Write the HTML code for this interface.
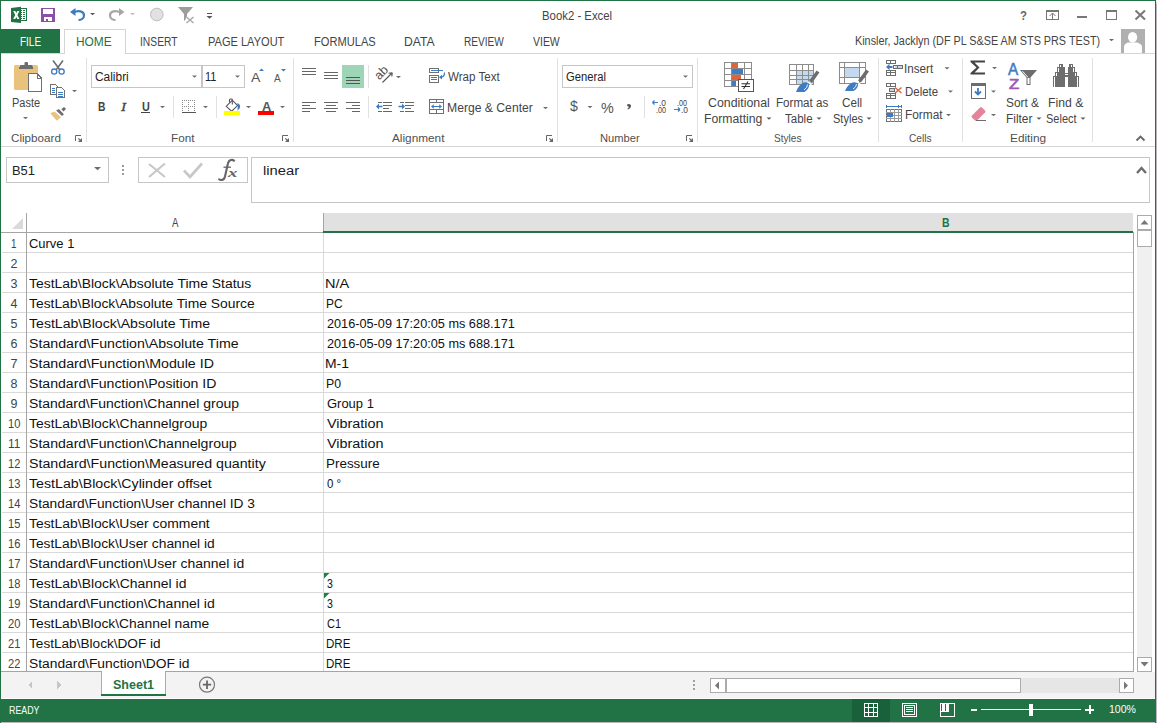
<!DOCTYPE html>
<html><head><meta charset="utf-8"><style>
html,body{margin:0;padding:0;width:1157px;height:723px;overflow:hidden;background:#fff;}
#t span{position:absolute;white-space:pre;line-height:1;transform-origin:0 0;font-family:"Liberation Sans", sans-serif;}
svg{position:absolute;left:0;top:0;}
</style></head><body>
<svg width="1157" height="723" viewBox="0 0 1157 723" shape-rendering="crispEdges">
<path d="M11 8 L21 6.8 L21 23 L11 22 Z" fill="#217346" shape-rendering="auto"/>
<rect x="21" y="8" width="6" height="13" fill="#217346"/>
<rect x="21" y="9" width="5" height="11" fill="#fff"/>
<rect x="21" y="10" width="1" height="1" fill="#217346"/>
<rect x="23" y="10" width="2" height="1" fill="#217346"/>
<rect x="21" y="12" width="1" height="1" fill="#217346"/>
<rect x="23" y="12" width="2" height="1" fill="#217346"/>
<rect x="21" y="14" width="1" height="1" fill="#217346"/>
<rect x="23" y="14" width="2" height="1" fill="#217346"/>
<rect x="21" y="16" width="1" height="1" fill="#217346"/>
<rect x="23" y="16" width="2" height="1" fill="#217346"/>
<rect x="21" y="18" width="1" height="1" fill="#217346"/>
<rect x="23" y="18" width="2" height="1" fill="#217346"/>
<path d="M13.2 11 h2.1 l1 1.9 l1 -1.9 h2.1 l-2 3.9 l2 4 h-2.1 l-1 -2 l-1 2 h-2.1 l2 -4 z" fill="#fff" shape-rendering="auto"/>
<path d="M41 8h14v14h-14z" fill="#8a4fa8"/>
<rect x="43" y="9" width="10" height="5" fill="#fff"/>
<rect x="44" y="17" width="8" height="4" fill="#fff"/>
<rect x="46" y="19" width="2" height="2" fill="#8b4ea6"/>
<path d="M73.5 12.5 C78 10 84 11 84 15.5 C84 18.5 81 20 78.5 20" fill="none" stroke="#3e7bc0" stroke-width="2.2" shape-rendering="auto"/>
<path d="M70 12 L75.5 8 L75.5 16 Z" fill="#3e7bc0" shape-rendering="auto"/>
<path d="M90 13h5l-2.5 2.25z" fill="#555" shape-rendering="auto"/>
<path d="M120.5 12.5 C116 10 110 11 110 15.5 C110 18.5 113 20 115.5 20" fill="none" stroke="#a6a6a6" stroke-width="2.2" shape-rendering="auto"/>
<path d="M124.5 12 L119 8 L119 16 Z" fill="#a6a6a6" shape-rendering="auto"/>
<path d="M130 13h5l-2.5 2.25z" fill="#bdbdbd" shape-rendering="auto"/>
<circle cx="156.8" cy="14.5" r="6.3" fill="#e3dfe3" stroke="#bdbdbd" stroke-width="1" shape-rendering="auto"/>
<path d="M178 7 H193 L187 14 V18 L184 21 V14 Z" fill="#9d9d9d" shape-rendering="auto"/>
<path d="M186.5 17 L193.5 23 M193.5 17 L186.5 23" stroke="#fff" stroke-width="3" shape-rendering="auto"/>
<path d="M186.5 17 L193.5 23 M193.5 17 L186.5 23" stroke="#a9a9a9" stroke-width="1.5" shape-rendering="auto"/>
<rect x="207" y="13" width="5" height="1" fill="#555"/>
<path d="M206.5 16h6l-3.0 2.70z" fill="#555" shape-rendering="auto"/>
<rect x="1046" y="10" width="13" height="1" fill="#777"/>
<rect x="1046" y="19" width="13" height="1" fill="#777"/>
<rect x="1046" y="10" width="1" height="10" fill="#777"/>
<rect x="1058" y="10" width="1" height="10" fill="#777"/>
<rect x="1046" y="11" width="13" height="1" fill="#777"/>
<path d="M1052.5 13 L1049.5 16 M1052.5 13 L1055.5 16 M1052.5 13.5 V19" stroke="#777" stroke-width="1" fill="none" shape-rendering="auto"/>
<rect x="1077" y="16" width="10" height="2" fill="#777"/>
<rect x="1106" y="10" width="11" height="1" fill="#777"/>
<rect x="1106" y="19" width="11" height="1" fill="#777"/>
<rect x="1106" y="10" width="1" height="10" fill="#777"/>
<rect x="1116" y="10" width="1" height="10" fill="#777"/>
<rect x="1106" y="11" width="11" height="1" fill="#777"/>
<path d="M1135.5 10.5 L1145 19.5 M1145 10.5 L1135.5 19.5" stroke="#777" stroke-width="2" shape-rendering="auto"/>
<rect x="0" y="29" width="60" height="25" fill="#217346"/>
<rect x="0" y="53" width="1155" height="1" fill="#d5d5d5"/>
<rect x="65" y="30" width="60" height="24" fill="#fff"/>
<rect x="64" y="29" width="1" height="25" fill="#d5d5d5"/>
<rect x="125" y="29" width="1" height="25" fill="#d5d5d5"/>
<rect x="64" y="29" width="62" height="1" fill="#d5d5d5"/>
<path d="M1109 39h5l-2.5 2.25z" fill="#666" shape-rendering="auto"/>
<rect x="1121" y="29" width="24" height="24" fill="#b0b0b0"/>
<ellipse cx="1132.6" cy="37.3" rx="4.6" ry="5.4" fill="#fff" shape-rendering="auto"/>
<path d="M1124 53 V47 C1124 44 1127 42.5 1129 42.5 H1136 C1138 42.5 1142 44 1142 47 V53 Z" fill="#fff" shape-rendering="auto"/>
<rect x="0" y="146" width="1155" height="1" fill="#d4d4d4"/>
<rect x="86" y="58" width="1" height="84" fill="#e1e1e1"/>
<rect x="293" y="58" width="1" height="84" fill="#e1e1e1"/>
<rect x="557" y="58" width="1" height="84" fill="#e1e1e1"/>
<rect x="697" y="58" width="1" height="84" fill="#e1e1e1"/>
<rect x="878" y="58" width="1" height="84" fill="#e1e1e1"/>
<rect x="962" y="58" width="1" height="84" fill="#e1e1e1"/>
<rect x="1092" y="58" width="1" height="84" fill="#e1e1e1"/>
<path d="M75.5 141 V135.5 H81" fill="none" stroke="#666" stroke-width="1" shape-rendering="auto"/>
<path d="M82 138 V142 H78 Z" fill="#666" shape-rendering="auto"/>
<path d="M78.3 138.3 L81 141" stroke="#666" stroke-width="1.2" shape-rendering="auto"/>
<path d="M282.5 141 V135.5 H288" fill="none" stroke="#666" stroke-width="1" shape-rendering="auto"/>
<path d="M289 138 V142 H285 Z" fill="#666" shape-rendering="auto"/>
<path d="M285.3 138.3 L288 141" stroke="#666" stroke-width="1.2" shape-rendering="auto"/>
<path d="M546.5 141 V135.5 H552" fill="none" stroke="#666" stroke-width="1" shape-rendering="auto"/>
<path d="M553 138 V142 H549 Z" fill="#666" shape-rendering="auto"/>
<path d="M549.3 138.3 L552 141" stroke="#666" stroke-width="1.2" shape-rendering="auto"/>
<path d="M686.5 141 V135.5 H692" fill="none" stroke="#666" stroke-width="1" shape-rendering="auto"/>
<path d="M693 138 V142 H689 Z" fill="#666" shape-rendering="auto"/>
<path d="M689.3 138.3 L692 141" stroke="#666" stroke-width="1.2" shape-rendering="auto"/>
<path d="M1136.5 140.5 L1140.5 136.5 L1144.5 140.5" fill="none" stroke="#666" stroke-width="1.8" shape-rendering="auto"/>
<rect x="14" y="65" width="24" height="25" rx="1.5" fill="#e9c27c" shape-rendering="auto"/>
<path d="M19 66.5 H33 V68.8 H19 Z" fill="#6d6d6d"/>
<path d="M20 68.5 V66 Q20 65 21 65 H24.5 V63 Q24.5 62 25.5 62 H27 Q28 62 28 63 V65 H31.5 Q32.5 65 32.5 66 V68.5 Z" fill="#6d6d6d" shape-rendering="auto"/>
<path d="M28.5 73.5 H37 L41.5 78 V91.5 H28.5 Z" fill="#fff" stroke="#707070" stroke-width="1"/>
<path d="M37 73.5 V78 H41.5" fill="none" stroke="#707070" stroke-width="1"/>
<path d="M23 117h5l-2.5 2.25z" fill="#6d6d6d" shape-rendering="auto"/>
<path d="M53 60.5 L60 70 M63 60.5 L56 70" stroke="#6d6d6d" stroke-width="1.6" fill="none" shape-rendering="auto"/>
<circle cx="54.2" cy="71.6" r="2.6" fill="none" stroke="#3e7bc0" stroke-width="1.3" shape-rendering="auto"/>
<circle cx="61.6" cy="71.6" r="2.6" fill="none" stroke="#3e7bc0" stroke-width="1.3" shape-rendering="auto"/>
<path d="M50.5 84.5 H55.5 L57.5 86.5 V94.5 H50.5 Z" fill="#fff" stroke="#707070" stroke-width="1"/>
<path d="M56.5 87.5 H61.5 L64.5 90.5 V97.5 H56.5 Z" fill="#fff" stroke="#707070" stroke-width="1"/>
<rect x="52" y="88" width="3" height="1" fill="#3e7bc0"/>
<rect x="52" y="90" width="3" height="1" fill="#3e7bc0"/>
<rect x="52" y="92" width="3" height="1" fill="#3e7bc0"/>
<rect x="58" y="92" width="5" height="1" fill="#3e7bc0"/>
<rect x="58" y="94" width="5" height="1" fill="#3e7bc0"/>
<rect x="58" y="96" width="5" height="1" fill="#3e7bc0"/>
<path d="M72 90h5l-2.5 2.25z" fill="#6d6d6d" shape-rendering="auto"/>
<path d="M50.2 113.3 L54.5 111.4 L61 117.2 L56.8 120.8 Z" fill="#e9c27c" shape-rendering="auto"/>
<path d="M56.1 110.4 L58.8 109.0 L63.9 114.2 L62.0 115.9 Z" fill="#6d6d6d" shape-rendering="auto"/>
<path d="M61.3 109.3 L64 107.0 L66 108.8 L63.7 111.4 Z" fill="#6d6d6d" shape-rendering="auto"/>
<rect x="91" y="65" width="112" height="23" fill="#fff"/>
<rect x="91" y="65" width="112" height="1" fill="#c6c6c6"/>
<rect x="91" y="87" width="112" height="1" fill="#c6c6c6"/>
<rect x="91" y="65" width="1" height="23" fill="#c6c6c6"/>
<rect x="202" y="65" width="1" height="23" fill="#c6c6c6"/>
<rect x="202" y="65" width="43" height="1" fill="#c6c6c6"/>
<rect x="202" y="87" width="43" height="1" fill="#c6c6c6"/>
<rect x="202" y="65" width="1" height="23" fill="#c6c6c6"/>
<rect x="244" y="65" width="1" height="23" fill="#c6c6c6"/>
<rect x="201" y="65" width="1" height="23" fill="#c6c6c6"/>
<path d="M192 75.5h5l-2.5 2.25z" fill="#6d6d6d" shape-rendering="auto"/>
<path d="M235 75.5h5l-2.5 2.25z" fill="#6d6d6d" shape-rendering="auto"/>
<path d="M259 71 L261.5 68.5 L264 71 Z" fill="#3e7bc0" shape-rendering="auto"/>
<path d="M281 69 L286 69 L283.5 71.5 Z" fill="#3e7bc0" shape-rendering="auto"/>
<rect x="141" y="112" width="9" height="1" fill="#444"/>
<path d="M160 106h5l-2.5 2.25z" fill="#6d6d6d" shape-rendering="auto"/>
<rect x="173" y="96" width="1" height="22" fill="#e1e1e1"/>
<rect x="182" y="100" width="1" height="1" fill="#8a8a8a"/>
<rect x="184" y="100" width="1" height="1" fill="#8a8a8a"/>
<rect x="186" y="100" width="1" height="1" fill="#8a8a8a"/>
<rect x="188" y="100" width="1" height="1" fill="#8a8a8a"/>
<rect x="190" y="100" width="1" height="1" fill="#8a8a8a"/>
<rect x="192" y="100" width="1" height="1" fill="#8a8a8a"/>
<rect x="194" y="100" width="1" height="1" fill="#8a8a8a"/>
<rect x="182" y="102" width="1" height="1" fill="#8a8a8a"/>
<rect x="188" y="102" width="1" height="1" fill="#8a8a8a"/>
<rect x="194" y="102" width="1" height="1" fill="#8a8a8a"/>
<rect x="182" y="104" width="1" height="1" fill="#8a8a8a"/>
<rect x="188" y="104" width="1" height="1" fill="#8a8a8a"/>
<rect x="194" y="104" width="1" height="1" fill="#8a8a8a"/>
<rect x="182" y="106" width="1" height="1" fill="#8a8a8a"/>
<rect x="184" y="106" width="1" height="1" fill="#8a8a8a"/>
<rect x="186" y="106" width="1" height="1" fill="#8a8a8a"/>
<rect x="188" y="106" width="1" height="1" fill="#8a8a8a"/>
<rect x="190" y="106" width="1" height="1" fill="#8a8a8a"/>
<rect x="192" y="106" width="1" height="1" fill="#8a8a8a"/>
<rect x="194" y="106" width="1" height="1" fill="#8a8a8a"/>
<rect x="182" y="108" width="1" height="1" fill="#8a8a8a"/>
<rect x="188" y="108" width="1" height="1" fill="#8a8a8a"/>
<rect x="194" y="108" width="1" height="1" fill="#8a8a8a"/>
<rect x="182" y="110" width="1" height="1" fill="#8a8a8a"/>
<rect x="188" y="110" width="1" height="1" fill="#8a8a8a"/>
<rect x="194" y="110" width="1" height="1" fill="#8a8a8a"/>
<rect x="182" y="112" width="1" height="1" fill="#8a8a8a"/>
<rect x="188" y="112" width="1" height="1" fill="#8a8a8a"/>
<rect x="194" y="112" width="1" height="1" fill="#8a8a8a"/>
<rect x="182" y="112" width="14" height="1" fill="#555"/>
<path d="M203 106h5l-2.5 2.25z" fill="#6d6d6d" shape-rendering="auto"/>
<rect x="216" y="96" width="1" height="22" fill="#e1e1e1"/>
<path d="M226.2 106.3 L232.3 100.2 L237.6 105.6 L231.6 111.2 Z" fill="#fff" stroke="#555" stroke-width="1.1" shape-rendering="auto"/>
<path d="M232.3 104.5 V99.8 Q232.3 99 231.3 99 H230.3 Q229.5 99 229.5 100 V102.5" fill="none" stroke="#555" stroke-width="1.1" shape-rendering="auto"/>
<path d="M237.2 103 Q240.8 104 240 107.5 Q239.3 109.5 237.5 110.6 L237.8 105.6 Z" fill="#3e7bc0" shape-rendering="auto"/>
<rect x="224" y="111" width="16" height="4" fill="#ffff00"/>
<path d="M246 106h5l-2.5 2.25z" fill="#6d6d6d" shape-rendering="auto"/>
<rect x="258" y="111" width="16" height="4" fill="#ff0000"/>
<path d="M280 106h5l-2.5 2.25z" fill="#6d6d6d" shape-rendering="auto"/>
<rect x="302" y="68" width="14" height="1" fill="#666"/>
<rect x="302" y="71" width="14" height="1" fill="#666"/>
<rect x="302" y="74" width="14" height="1" fill="#666"/>
<rect x="324" y="72" width="14" height="1" fill="#666"/>
<rect x="324" y="75" width="14" height="1" fill="#666"/>
<rect x="324" y="78" width="14" height="1" fill="#666"/>
<rect x="346" y="77" width="14" height="1" fill="#666"/>
<rect x="346" y="80" width="14" height="1" fill="#666"/>
<rect x="346" y="83" width="14" height="1" fill="#666"/>
<rect x="342" y="65" width="22" height="23" fill="#9fd5b7"/>
<rect x="346" y="77" width="14" height="1" fill="#555"/>
<rect x="346" y="80" width="14" height="1" fill="#555"/>
<rect x="346" y="83" width="14" height="1" fill="#555"/>
<rect x="368" y="65" width="1" height="23" fill="#e1e1e1"/>
<text x="0" y="0" font-family="Liberation Sans" font-size="12.5" fill="#555" transform="translate(379.2 80.5) rotate(-45)">ab</text>
<path d="M382.5 82.5 L392 73 M392.3 72.7 L388.5 73.2 M392.3 72.7 L391.8 76.5" stroke="#555" stroke-width="1.1" fill="none" shape-rendering="auto"/>
<path d="M396 76h5l-2.5 2.25z" fill="#6d6d6d" shape-rendering="auto"/>
<rect x="302" y="102" width="14" height="1" fill="#666"/>
<rect x="302" y="105" width="8" height="1" fill="#666"/>
<rect x="302" y="108" width="14" height="1" fill="#666"/>
<rect x="302" y="111" width="8" height="1" fill="#666"/>
<rect x="324" y="102" width="14" height="1" fill="#666"/>
<rect x="326" y="105" width="10" height="1" fill="#666"/>
<rect x="324" y="108" width="14" height="1" fill="#666"/>
<rect x="326" y="111" width="10" height="1" fill="#666"/>
<rect x="346" y="102" width="14" height="1" fill="#666"/>
<rect x="352" y="105" width="8" height="1" fill="#666"/>
<rect x="346" y="108" width="14" height="1" fill="#666"/>
<rect x="352" y="111" width="8" height="1" fill="#666"/>
<rect x="368" y="96" width="1" height="22" fill="#e1e1e1"/>
<rect x="378" y="102" width="4" height="1" fill="#666"/>
<rect x="383" y="102" width="9" height="1" fill="#666"/>
<rect x="383" y="105" width="9" height="1" fill="#666"/>
<rect x="383" y="108" width="6" height="1" fill="#666"/>
<rect x="378" y="111" width="4" height="1" fill="#666"/>
<rect x="383" y="111" width="9" height="1" fill="#666"/>
<path d="M376 106.5 L379 103.5 V105.7 H382.5 V107.3 H379 V109.5 Z" fill="#3e7bc0" shape-rendering="auto"/>
<rect x="400" y="102" width="4" height="1" fill="#666"/>
<rect x="405" y="102" width="9" height="1" fill="#666"/>
<rect x="405" y="105" width="9" height="1" fill="#666"/>
<rect x="405" y="108" width="6" height="1" fill="#666"/>
<rect x="400" y="111" width="4" height="1" fill="#666"/>
<rect x="405" y="111" width="9" height="1" fill="#666"/>
<path d="M405 106.5 L402 103.5 V105.7 H398.5 V107.3 H402 V109.5 Z" fill="#3e7bc0" shape-rendering="auto"/>
<rect x="429" y="68" width="10" height="5" fill="#fff"/>
<rect x="429" y="68" width="10" height="1" fill="#707070"/>
<rect x="429" y="72" width="10" height="1" fill="#707070"/>
<rect x="429" y="68" width="1" height="5" fill="#707070"/>
<rect x="438" y="68" width="1" height="5" fill="#707070"/>
<rect x="431" y="70" width="12" height="1" fill="#3e7bc0"/>
<rect x="429" y="75" width="10" height="8" fill="#fff"/>
<rect x="429" y="75" width="10" height="1" fill="#707070"/>
<rect x="429" y="82" width="10" height="1" fill="#707070"/>
<rect x="429" y="75" width="1" height="8" fill="#707070"/>
<rect x="438" y="75" width="1" height="8" fill="#707070"/>
<rect x="431" y="77" width="6" height="1" fill="#3e7bc0"/>
<rect x="431" y="79" width="6" height="1" fill="#3e7bc0"/>
<path d="M444.5 72.5 Q444.8 77.2 440.2 77.2" fill="none" stroke="#3e7bc0" stroke-width="1.2" shape-rendering="auto"/>
<path d="M439 77.2 L442 74.8 L442 79.6 Z" fill="#3e7bc0" shape-rendering="auto"/>
<rect x="429" y="99" width="15" height="15" fill="#fff"/>
<rect x="429" y="99" width="15" height="1" fill="#707070"/>
<rect x="429" y="113" width="15" height="1" fill="#707070"/>
<rect x="429" y="99" width="1" height="15" fill="#707070"/>
<rect x="443" y="99" width="1" height="15" fill="#707070"/>
<rect x="429" y="102" width="15" height="1" fill="#707070"/>
<rect x="429" y="109" width="15" height="1" fill="#707070"/>
<rect x="436" y="99" width="1" height="4" fill="#707070"/>
<rect x="436" y="109" width="1" height="5" fill="#707070"/>
<rect x="432" y="106" width="9" height="1" fill="#3e7bc0"/>
<path d="M431 106.5 L433.8 104.3 V108.7 Z M442 106.5 L439.2 104.3 V108.7 Z" fill="#3e7bc0" shape-rendering="auto"/>
<path d="M543 107h5l-2.5 2.25z" fill="#6d6d6d" shape-rendering="auto"/>
<rect x="562" y="65" width="131" height="23" fill="#fff"/>
<rect x="562" y="65" width="131" height="1" fill="#c6c6c6"/>
<rect x="562" y="87" width="131" height="1" fill="#c6c6c6"/>
<rect x="562" y="65" width="1" height="23" fill="#c6c6c6"/>
<rect x="692" y="65" width="1" height="23" fill="#c6c6c6"/>
<path d="M683 75.5h5l-2.5 2.25z" fill="#6d6d6d" shape-rendering="auto"/>
<path d="M587.5 106h5l-2.5 2.25z" fill="#6d6d6d" shape-rendering="auto"/>
<path d="M628.5 104 Q631.5 104 631 106.5 Q630.5 108.5 628 109.5 L627.5 108.5 Q629 107.5 629 106.8 Q627 106.5 627 105.3 Q627.2 104 628.5 104 Z" fill="#555" shape-rendering="auto"/>
<rect x="644" y="96" width="1" height="22" fill="#e1e1e1"/>
<path d="M652.5 102.5 H658 M652.5 102.5 L654.5 100.5 M652.5 102.5 L654.5 104.5" stroke="#3e7bc0" stroke-width="1.2" fill="none" shape-rendering="auto"/>
<path d="M674 109.5 H680 M680 109.5 L678 107.5 M680 109.5 L678 111.5" stroke="#3e7bc0" stroke-width="1.2" fill="none" shape-rendering="auto"/>
<rect x="724" y="62" width="28" height="1" fill="#8c8c8c"/>
<rect x="724" y="68" width="28" height="1" fill="#8c8c8c"/>
<rect x="724" y="74" width="28" height="1" fill="#8c8c8c"/>
<rect x="724" y="80" width="28" height="1" fill="#8c8c8c"/>
<rect x="724" y="86" width="28" height="1" fill="#8c8c8c"/>
<rect x="724" y="62" width="1" height="25" fill="#8c8c8c"/>
<rect x="731" y="62" width="1" height="25" fill="#8c8c8c"/>
<rect x="744" y="62" width="1" height="25" fill="#8c8c8c"/>
<rect x="751" y="62" width="1" height="25" fill="#8c8c8c"/>
<rect x="732" y="63" width="6" height="5" fill="#e0643a"/>
<rect x="732" y="69" width="11" height="5" fill="#3f7cc4"/>
<rect x="732" y="75" width="9" height="5" fill="#e0643a"/>
<rect x="732" y="81" width="4" height="5" fill="#3f7cc4"/>
<rect x="738" y="79" width="16" height="13" fill="#fff"/>
<rect x="738" y="79" width="16" height="1" fill="#555"/>
<rect x="738" y="91" width="16" height="1" fill="#555"/>
<rect x="738" y="79" width="1" height="13" fill="#555"/>
<rect x="753" y="79" width="1" height="13" fill="#555"/>
<path d="M741.5 83.8 H750 M741.5 86.5 H750 M748 81.5 L743.5 89" stroke="#333" stroke-width="1.1" fill="none" shape-rendering="auto"/>
<path d="M766.5 117.5h5l-2.5 2.25z" fill="#5a5a5a" shape-rendering="auto"/>
<rect x="796" y="70" width="18" height="15" fill="#c5d9ee"/>
<rect x="789" y="64" width="25" height="1" fill="#8c8c8c"/>
<rect x="789" y="70" width="25" height="1" fill="#8c8c8c"/>
<rect x="789" y="75" width="25" height="1" fill="#8c8c8c"/>
<rect x="789" y="79" width="25" height="1" fill="#8c8c8c"/>
<rect x="789" y="84" width="25" height="1" fill="#8c8c8c"/>
<rect x="789" y="64" width="1" height="21" fill="#8c8c8c"/>
<rect x="796" y="64" width="1" height="21" fill="#8c8c8c"/>
<rect x="802" y="64" width="1" height="21" fill="#8c8c8c"/>
<rect x="808" y="64" width="1" height="21" fill="#8c8c8c"/>
<rect x="813" y="64" width="1" height="21" fill="#8c8c8c"/>
<path d="M810.5 82 L818 71.5" stroke="#6d6d6d" stroke-width="3.6" shape-rendering="auto"/>
<path d="M807.5 81.5 L811.5 85" stroke="#fff" stroke-width="1.2" shape-rendering="auto"/>
<path d="M796 92 Q798.5 85 803.5 82.5 Q807.5 81.5 809 84.5 Q809.5 88.5 804.5 92 Z" fill="#3f7cc4" shape-rendering="auto"/>
<path d="M804 90 Q807.5 87.5 807.5 84.5" stroke="#fff" stroke-width="0.9" fill="none" shape-rendering="auto"/>
<path d="M816.5 117.5h5l-2.5 2.25z" fill="#5a5a5a" shape-rendering="auto"/>
<rect x="844" y="67" width="15" height="10" fill="#c5d9ee"/>
<rect x="839" y="62" width="27" height="1" fill="#8c8c8c"/>
<rect x="839" y="67" width="27" height="1" fill="#8c8c8c"/>
<rect x="839" y="77" width="27" height="1" fill="#8c8c8c"/>
<rect x="839" y="83" width="27" height="1" fill="#8c8c8c"/>
<rect x="839" y="62" width="1" height="22" fill="#8c8c8c"/>
<rect x="844" y="62" width="1" height="22" fill="#8c8c8c"/>
<rect x="859" y="62" width="1" height="22" fill="#8c8c8c"/>
<rect x="865" y="62" width="1" height="22" fill="#8c8c8c"/>
<path d="M859.5 81.5 L867.5 70.5" stroke="#6d6d6d" stroke-width="3.6" shape-rendering="auto"/>
<path d="M856.5 81 L860.5 84.5" stroke="#fff" stroke-width="1.2" shape-rendering="auto"/>
<path d="M845 91 Q847.5 84.5 852.5 82.5 Q856.5 81.5 858 84 Q858.5 88 853.5 91 Z" fill="#3f7cc4" shape-rendering="auto"/>
<path d="M853 89 Q856.5 87 856.5 84" stroke="#fff" stroke-width="0.9" fill="none" shape-rendering="auto"/>
<path d="M866.5 117.5h5l-2.5 2.25z" fill="#5a5a5a" shape-rendering="auto"/>
<rect x="886" y="60" width="10" height="1" fill="#6d6d6d"/>
<rect x="886" y="63" width="10" height="1" fill="#6d6d6d"/>
<rect x="886" y="60" width="1" height="4" fill="#6d6d6d"/>
<rect x="895" y="60" width="1" height="4" fill="#6d6d6d"/>
<rect x="890" y="60" width="1" height="4" fill="#6d6d6d"/>
<rect x="886" y="70" width="10" height="1" fill="#6d6d6d"/>
<rect x="886" y="75" width="10" height="1" fill="#6d6d6d"/>
<rect x="886" y="70" width="1" height="6" fill="#6d6d6d"/>
<rect x="895" y="70" width="1" height="6" fill="#6d6d6d"/>
<rect x="890" y="70" width="1" height="6" fill="#6d6d6d"/>
<rect x="886" y="72" width="10" height="1" fill="#6d6d6d"/>
<rect x="893" y="65" width="10" height="1" fill="#6d6d6d"/>
<rect x="893" y="68" width="10" height="1" fill="#6d6d6d"/>
<rect x="893" y="65" width="1" height="4" fill="#6d6d6d"/>
<rect x="902" y="65" width="1" height="4" fill="#6d6d6d"/>
<rect x="897" y="65" width="1" height="4" fill="#6d6d6d"/>
<rect x="894" y="66" width="3" height="2" fill="#c5d9ee"/>
<rect x="898" y="66" width="4" height="2" fill="#c5d9ee"/>
<rect x="886" y="64" width="9" height="6" fill="#fff"/>
<rect x="893" y="65" width="10" height="1" fill="#6d6d6d"/>
<rect x="893" y="68" width="10" height="1" fill="#6d6d6d"/>
<rect x="893" y="65" width="1" height="4" fill="#6d6d6d"/>
<rect x="902" y="65" width="1" height="4" fill="#6d6d6d"/>
<rect x="897" y="65" width="1" height="4" fill="#6d6d6d"/>
<path d="M886 67 L889.5 63.8 V66 H892.5 V68 H889.5 V70.2 Z" fill="#3e7bc0" shape-rendering="auto"/>
<path d="M944.5 67.2h5l-2.5 2.25z" fill="#6d6d6d" shape-rendering="auto"/>
<rect x="886" y="83" width="10" height="1" fill="#6d6d6d"/>
<rect x="886" y="86" width="10" height="1" fill="#6d6d6d"/>
<rect x="886" y="83" width="1" height="4" fill="#6d6d6d"/>
<rect x="895" y="83" width="1" height="4" fill="#6d6d6d"/>
<rect x="890" y="83" width="1" height="4" fill="#6d6d6d"/>
<rect x="886" y="93" width="10" height="1" fill="#6d6d6d"/>
<rect x="886" y="98" width="10" height="1" fill="#6d6d6d"/>
<rect x="886" y="93" width="1" height="6" fill="#6d6d6d"/>
<rect x="895" y="93" width="1" height="6" fill="#6d6d6d"/>
<rect x="890" y="93" width="1" height="6" fill="#6d6d6d"/>
<rect x="886" y="95" width="10" height="1" fill="#6d6d6d"/>
<rect x="889" y="88" width="6" height="4" fill="#c5d9ee"/>
<rect x="889" y="88" width="6" height="1" fill="#6d6d6d"/>
<rect x="889" y="91" width="6" height="1" fill="#6d6d6d"/>
<rect x="889" y="88" width="1" height="4" fill="#6d6d6d"/>
<rect x="894" y="88" width="1" height="4" fill="#6d6d6d"/>
<path d="M895 87.5 L901.5 93 M901.5 87.5 L895 93" stroke="#e0643a" stroke-width="1.5" shape-rendering="auto"/>
<path d="M948 90.5h5l-2.5 2.25z" fill="#6d6d6d" shape-rendering="auto"/>
<path d="M886.5 106.5 H901.5 M886.5 105 V108 M901.5 105 V108 M888 106.5 L889.5 105.5 M888 106.5 L889.5 107.5 M900 106.5 L898.5 105.5 M900 106.5 L898.5 107.5" stroke="#3e7bc0" stroke-width="1" fill="none"/>
<rect x="886" y="109" width="16" height="1" fill="#707070"/>
<rect x="886" y="121" width="16" height="1" fill="#707070"/>
<rect x="886" y="109" width="1" height="13" fill="#707070"/>
<rect x="901" y="109" width="1" height="13" fill="#707070"/>
<rect x="886" y="112" width="16" height="1" fill="#9a9a9a"/>
<rect x="886" y="115" width="16" height="1" fill="#9a9a9a"/>
<rect x="886" y="118" width="16" height="1" fill="#9a9a9a"/>
<rect x="890" y="109" width="1" height="13" fill="#9a9a9a"/>
<rect x="894" y="109" width="1" height="13" fill="#9a9a9a"/>
<rect x="898" y="109" width="1" height="13" fill="#9a9a9a"/>
<rect x="887" y="113" width="6" height="4" fill="#3e7bc0"/>
<path d="M946 114h5l-2.5 2.25z" fill="#6d6d6d" shape-rendering="auto"/>
<path d="M970.5 60.5 H985 V62.5 H974.5 L979.5 67.5 L974.5 72.5 H985 V74.5 H970.5 V73 L976.5 67.5 L970.5 62 Z" fill="#444" shape-rendering="auto"/>
<path d="M992 67h5l-2.5 2.25z" fill="#6d6d6d" shape-rendering="auto"/>
<rect x="971" y="83" width="15" height="16" fill="#fff"/>
<rect x="971" y="83" width="15" height="1" fill="#6d6d6d"/>
<rect x="971" y="98" width="15" height="1" fill="#6d6d6d"/>
<rect x="971" y="83" width="1" height="16" fill="#6d6d6d"/>
<rect x="985" y="83" width="1" height="16" fill="#6d6d6d"/>
<rect x="971" y="83" width="15" height="3" fill="#6d6d6d"/>
<path d="M978 88 V94 M975 91.5 L978 94.5 L981 91.5" stroke="#3e7bc0" stroke-width="1.8" fill="none" shape-rendering="auto"/>
<path d="M991 90.5h5l-2.5 2.25z" fill="#6d6d6d" shape-rendering="auto"/>
<path d="M972 115.5 L980 107.5 Q981 106.5 982 107.5 L985 110.5 Q986 111.5 985 112.5 L977 120.5 Q976 121 975 120.5 L972 117.5 Q971 116.5 972 115.5 Z" fill="#e8829a" shape-rendering="auto"/>
<rect x="976" y="120" width="10" height="1" fill="#6d6d6d"/>
<path d="M991 114h5l-2.5 2.25z" fill="#6d6d6d" shape-rendering="auto"/>
<path d="M1020 70 H1037 L1030.5 77.5 V85 H1026.5 V77.5 Z" fill="#6d6d6d" shape-rendering="auto"/>
<path d="M1027.5 78 V84 H1029.5 V78 Z" fill="#fff" shape-rendering="auto"/>
<path d="M1022.5 71.2 L1027.8 77.2" stroke="#fff" stroke-width="0.9" shape-rendering="auto"/>
<path d="M1036.5 117.5h5l-2.5 2.25z" fill="#5a5a5a" shape-rendering="auto"/>
<path d="M1053 87 V76 H1055 V72 H1057 V67 H1059 V64 H1063 V67 H1065 V72.5 H1068 V67 H1069 V64 H1073 V67 H1075 V72 H1077 V76 H1079 V87 H1068 V77 H1065 V87 Z" fill="#6d6d6d"/>
<rect x="1054" y="77" width="1" height="10" fill="#fff"/>
<rect x="1056" y="73" width="1" height="3" fill="#fff"/>
<rect x="1058" y="68" width="1" height="4" fill="#fff"/>
<rect x="1060" y="65" width="1" height="2" fill="#fff"/>
<rect x="1077" y="77" width="1" height="10" fill="#fff"/>
<rect x="1075" y="73" width="1" height="3" fill="#fff"/>
<rect x="1073" y="68" width="1" height="4" fill="#fff"/>
<rect x="1071" y="65" width="1" height="2" fill="#fff"/>
<rect x="1065" y="74" width="3" height="1" fill="#fff"/>
<path d="M1080.5 117.5h5l-2.5 2.25z" fill="#5a5a5a" shape-rendering="auto"/>
<rect x="6" y="157" width="103" height="26" fill="#fff"/>
<rect x="6" y="157" width="103" height="1" fill="#c6c6c6"/>
<rect x="6" y="182" width="103" height="1" fill="#c6c6c6"/>
<rect x="6" y="157" width="1" height="26" fill="#c6c6c6"/>
<rect x="108" y="157" width="1" height="26" fill="#c6c6c6"/>
<path d="M94 167h7l-3.5 3.15z" fill="#6d6d6d" shape-rendering="auto"/>
<rect x="122" y="165" width="2" height="2" fill="#9a9a9a"/>
<rect x="122" y="169" width="2" height="2" fill="#9a9a9a"/>
<rect x="122" y="173" width="2" height="2" fill="#9a9a9a"/>
<rect x="138" y="157" width="110" height="26" fill="#fff"/>
<rect x="138" y="157" width="110" height="1" fill="#c6c6c6"/>
<rect x="138" y="182" width="110" height="1" fill="#c6c6c6"/>
<rect x="138" y="157" width="1" height="26" fill="#c6c6c6"/>
<rect x="247" y="157" width="1" height="26" fill="#c6c6c6"/>
<path d="M149 164 L165 177 M165 163.5 L149 177" stroke="#c8c8c8" stroke-width="2.2" shape-rendering="auto"/>
<path d="M184 170.5 L190 177 L202 163.5" stroke="#c8c8c8" stroke-width="2.8" fill="none" shape-rendering="auto"/>
<path d="M234.5 161.5 Q233.5 159.5 231 160 Q228.5 160.5 227.8 164 L225 176.5 Q224 180.5 221 180 Q219 179.8 219 178.5" fill="none" stroke="#666" stroke-width="2.1" shape-rendering="auto"/>
<path d="M223.5 167.2 H231" stroke="#666" stroke-width="1.3" shape-rendering="auto"/>
<rect x="251" y="157" width="899" height="46" fill="#fff"/>
<rect x="251" y="157" width="899" height="1" fill="#c6c6c6"/>
<rect x="251" y="202" width="899" height="1" fill="#c6c6c6"/>
<rect x="251" y="157" width="1" height="46" fill="#c6c6c6"/>
<rect x="1149" y="157" width="1" height="46" fill="#c6c6c6"/>
<path d="M1137 173 L1141.5 168 L1146 173" fill="none" stroke="#6d6d6d" stroke-width="2.4" shape-rendering="auto"/>
<rect x="324" y="213" width="809" height="18" fill="#e1e1e1"/>
<rect x="26" y="213" width="1" height="459" fill="#a5a5a5"/>
<rect x="1" y="232" width="322" height="1" fill="#a5a5a5"/>
<rect x="323" y="231" width="810" height="2" fill="#217346"/>
<rect x="323" y="213" width="1" height="18" fill="#a5a5a5"/>
<path d="M23 218 V229 H12 Z" fill="#dadada" shape-rendering="auto"/>
<rect x="2" y="252" width="24" height="1" fill="#d9d9d9"/>
<rect x="27" y="252" width="1106" height="1" fill="#d9d9d9"/>
<rect x="2" y="272" width="24" height="1" fill="#d9d9d9"/>
<rect x="27" y="272" width="1106" height="1" fill="#d9d9d9"/>
<rect x="2" y="292" width="24" height="1" fill="#d9d9d9"/>
<rect x="27" y="292" width="1106" height="1" fill="#d9d9d9"/>
<rect x="2" y="312" width="24" height="1" fill="#d9d9d9"/>
<rect x="27" y="312" width="1106" height="1" fill="#d9d9d9"/>
<rect x="2" y="332" width="24" height="1" fill="#d9d9d9"/>
<rect x="27" y="332" width="1106" height="1" fill="#d9d9d9"/>
<rect x="2" y="352" width="24" height="1" fill="#d9d9d9"/>
<rect x="27" y="352" width="1106" height="1" fill="#d9d9d9"/>
<rect x="2" y="372" width="24" height="1" fill="#d9d9d9"/>
<rect x="27" y="372" width="1106" height="1" fill="#d9d9d9"/>
<rect x="2" y="392" width="24" height="1" fill="#d9d9d9"/>
<rect x="27" y="392" width="1106" height="1" fill="#d9d9d9"/>
<rect x="2" y="412" width="24" height="1" fill="#d9d9d9"/>
<rect x="27" y="412" width="1106" height="1" fill="#d9d9d9"/>
<rect x="2" y="432" width="24" height="1" fill="#d9d9d9"/>
<rect x="27" y="432" width="1106" height="1" fill="#d9d9d9"/>
<rect x="2" y="452" width="24" height="1" fill="#d9d9d9"/>
<rect x="27" y="452" width="1106" height="1" fill="#d9d9d9"/>
<rect x="2" y="472" width="24" height="1" fill="#d9d9d9"/>
<rect x="27" y="472" width="1106" height="1" fill="#d9d9d9"/>
<rect x="2" y="492" width="24" height="1" fill="#d9d9d9"/>
<rect x="27" y="492" width="1106" height="1" fill="#d9d9d9"/>
<rect x="2" y="512" width="24" height="1" fill="#d9d9d9"/>
<rect x="27" y="512" width="1106" height="1" fill="#d9d9d9"/>
<rect x="2" y="532" width="24" height="1" fill="#d9d9d9"/>
<rect x="27" y="532" width="1106" height="1" fill="#d9d9d9"/>
<rect x="2" y="552" width="24" height="1" fill="#d9d9d9"/>
<rect x="27" y="552" width="1106" height="1" fill="#d9d9d9"/>
<rect x="2" y="572" width="24" height="1" fill="#d9d9d9"/>
<rect x="27" y="572" width="1106" height="1" fill="#d9d9d9"/>
<rect x="2" y="592" width="24" height="1" fill="#d9d9d9"/>
<rect x="27" y="592" width="1106" height="1" fill="#d9d9d9"/>
<rect x="2" y="612" width="24" height="1" fill="#d9d9d9"/>
<rect x="27" y="612" width="1106" height="1" fill="#d9d9d9"/>
<rect x="2" y="632" width="24" height="1" fill="#d9d9d9"/>
<rect x="27" y="632" width="1106" height="1" fill="#d9d9d9"/>
<rect x="2" y="652" width="24" height="1" fill="#d9d9d9"/>
<rect x="27" y="652" width="1106" height="1" fill="#d9d9d9"/>
<rect x="1" y="671" width="101" height="1" fill="#a5a5a5"/>
<rect x="165" y="671" width="969" height="1" fill="#a5a5a5"/>
<rect x="323" y="233" width="1" height="438" fill="#d9d9d9"/>
<rect x="1133" y="232" width="1" height="440" fill="#a5a5a5"/>
<path d="M324 573 H329.5 L324 578.5 Z" fill="#1f8045" shape-rendering="auto"/>
<path d="M324 593 H329.5 L324 598.5 Z" fill="#1f8045" shape-rendering="auto"/>
<rect x="1137" y="247" width="15" height="410" fill="#f0f0f0"/>
<rect x="1137" y="215" width="15" height="15" fill="#fff"/>
<rect x="1137" y="215" width="15" height="1" fill="#ababab"/>
<rect x="1137" y="229" width="15" height="1" fill="#ababab"/>
<rect x="1137" y="215" width="1" height="15" fill="#ababab"/>
<rect x="1151" y="215" width="1" height="15" fill="#ababab"/>
<path d="M1140.5 224.5 L1144.5 220 L1148.5 224.5 Z" fill="#777" shape-rendering="auto"/>
<rect x="1137" y="230" width="15" height="17" fill="#fff"/>
<rect x="1137" y="230" width="15" height="1" fill="#ababab"/>
<rect x="1137" y="246" width="15" height="1" fill="#ababab"/>
<rect x="1137" y="230" width="1" height="17" fill="#ababab"/>
<rect x="1151" y="230" width="1" height="17" fill="#ababab"/>
<rect x="1137" y="657" width="15" height="15" fill="#fff"/>
<rect x="1137" y="657" width="15" height="1" fill="#ababab"/>
<rect x="1137" y="671" width="15" height="1" fill="#ababab"/>
<rect x="1137" y="657" width="1" height="15" fill="#ababab"/>
<rect x="1151" y="657" width="1" height="15" fill="#ababab"/>
<path d="M1140.5 662 L1148.5 662 L1144.5 666.5 Z" fill="#777" shape-rendering="auto"/>
<rect x="1" y="672" width="1154" height="26" fill="#f3f3f3"/>
<path d="M32 681 L28 685 L32 689 Z" fill="#c6c6c6"/>
<path d="M57 681 L61 685 L57 689 Z" fill="#c6c6c6"/>
<rect x="101" y="672" width="65" height="22" fill="#fff"/>
<rect x="101" y="672" width="1" height="24" fill="#ababab"/>
<rect x="165" y="672" width="1" height="24" fill="#ababab"/>
<rect x="101" y="694" width="65" height="2" fill="#217346"/>
<circle cx="207" cy="684.7" r="7.5" fill="none" stroke="#777" stroke-width="1.2" shape-rendering="auto"/>
<path d="M207 680.5 V689 M202.8 684.7 H211.2" stroke="#666" stroke-width="1.8" shape-rendering="auto"/>
<rect x="693" y="680" width="2" height="2" fill="#a0a0a0"/>
<rect x="693" y="684" width="2" height="2" fill="#a0a0a0"/>
<rect x="693" y="688" width="2" height="2" fill="#a0a0a0"/>
<rect x="1020" y="678" width="99" height="15" fill="#e6e6e6"/>
<rect x="710" y="678" width="16" height="15" fill="#fff"/>
<rect x="710" y="678" width="16" height="1" fill="#ababab"/>
<rect x="710" y="692" width="16" height="1" fill="#ababab"/>
<rect x="710" y="678" width="1" height="15" fill="#ababab"/>
<rect x="725" y="678" width="1" height="15" fill="#ababab"/>
<path d="M715 685.5 L719 681.5 V689.5 Z" fill="#777" shape-rendering="auto"/>
<rect x="725" y="678" width="296" height="15" fill="#fff"/>
<rect x="725" y="678" width="296" height="1" fill="#ababab"/>
<rect x="725" y="692" width="296" height="1" fill="#ababab"/>
<rect x="725" y="678" width="1" height="15" fill="#ababab"/>
<rect x="1020" y="678" width="1" height="15" fill="#ababab"/>
<rect x="725" y="678" width="2" height="15" fill="#ababab"/>
<rect x="1119" y="678" width="15" height="15" fill="#fff"/>
<rect x="1119" y="678" width="15" height="1" fill="#ababab"/>
<rect x="1119" y="692" width="15" height="1" fill="#ababab"/>
<rect x="1119" y="678" width="1" height="15" fill="#ababab"/>
<rect x="1133" y="678" width="1" height="15" fill="#ababab"/>
<path d="M1128 685.5 L1124 681.5 V689.5 Z" fill="#777" shape-rendering="auto"/>
<rect x="0" y="699" width="1157" height="23" fill="#217346"/>
<rect x="0" y="722" width="1157" height="1" fill="#bcb6bc"/>
<rect x="852" y="699" width="38" height="23" fill="#19613a"/>
<rect x="864" y="703" width="14" height="1" fill="#fff"/>
<rect x="864" y="716" width="14" height="1" fill="#fff"/>
<rect x="864" y="703" width="1" height="14" fill="#fff"/>
<rect x="877" y="703" width="1" height="14" fill="#fff"/>
<rect x="868" y="703" width="1" height="14" fill="#fff"/>
<rect x="864" y="707" width="14" height="1" fill="#fff"/>
<rect x="873" y="703" width="1" height="14" fill="#fff"/>
<rect x="864" y="712" width="14" height="1" fill="#fff"/>
<rect x="902" y="703" width="15" height="1" fill="#fff"/>
<rect x="902" y="716" width="15" height="1" fill="#fff"/>
<rect x="902" y="703" width="1" height="14" fill="#fff"/>
<rect x="916" y="703" width="1" height="14" fill="#fff"/>
<rect x="904" y="705" width="11" height="1" fill="#fff"/>
<rect x="904" y="714" width="11" height="1" fill="#fff"/>
<rect x="904" y="705" width="1" height="10" fill="#fff"/>
<rect x="914" y="705" width="1" height="10" fill="#fff"/>
<rect x="906" y="707" width="7" height="1" fill="#fff"/>
<rect x="906" y="709" width="7" height="1" fill="#fff"/>
<rect x="906" y="711" width="7" height="1" fill="#fff"/>
<rect x="940" y="703" width="15" height="1" fill="#fff"/>
<rect x="940" y="716" width="15" height="1" fill="#fff"/>
<rect x="940" y="703" width="1" height="14" fill="#fff"/>
<rect x="954" y="703" width="1" height="14" fill="#fff"/>
<rect x="942" y="704" width="3" height="7" fill="#fff"/>
<rect x="946" y="704" width="3" height="7" fill="#fff"/>
<rect x="940" y="711" width="9" height="1" fill="#fff"/>
<rect x="971" y="709" width="6" height="2" fill="#fff"/>
<rect x="981" y="709" width="100" height="1" fill="#fff"/>
<rect x="1029" y="704" width="4" height="12" fill="#fff"/>
<rect x="1085" y="709" width="9" height="2" fill="#fff"/>
<rect x="1088.5" y="705" width="2" height="9" fill="#fff"/>
<rect x="0" y="0" width="1157" height="1" fill="#217346"/>
<rect x="0" y="0" width="1" height="723" fill="#217346"/>
<rect x="1155" y="0" width="1" height="723" fill="#217346"/>
<rect x="1156" y="0" width="1" height="723" fill="#bcb6bc"/>
<rect x="1156" y="0" width="1" height="2" fill="#f0f0f0"/>
<rect x="1156" y="2" width="1" height="2" fill="#d8d4d8"/>
</svg>
<div id="t">
<span style="left:542.09px;top:10.00px;font-size:12.5px;color:#444;font-weight:400;font-family:'Liberation Sans';transform:scaleX(0.9092);">Book2 - Excel</span>
<span style="left:1020.00px;top:8.70px;font-size:13px;color:#666;font-weight:700;font-family:'Liberation Sans';transform:scaleX(0.8750);">?</span>
<span style="left:20.20px;top:36.00px;font-size:12.5px;color:#fff;font-weight:400;font-family:'Liberation Sans';transform:scaleX(0.7981);">FILE</span>
<span style="left:76.35px;top:36.00px;font-size:12.5px;color:#217346;font-weight:400;font-family:'Liberation Sans';transform:scaleX(0.9513);">HOME</span>
<span style="left:139.98px;top:36.00px;font-size:12.5px;color:#444444;font-weight:400;font-family:'Liberation Sans';transform:scaleX(0.8227);">INSERT</span>
<span style="left:207.62px;top:36.00px;font-size:12.5px;color:#444444;font-weight:400;font-family:'Liberation Sans';transform:scaleX(0.8842);">PAGE LAYOUT</span>
<span style="left:313.61px;top:36.00px;font-size:12.5px;color:#444444;font-weight:400;font-family:'Liberation Sans';transform:scaleX(0.8882);">FORMULAS</span>
<span style="left:403.53px;top:36.00px;font-size:12.5px;color:#444444;font-weight:400;font-family:'Liberation Sans';transform:scaleX(0.9729);">DATA</span>
<span style="left:463.79px;top:36.00px;font-size:12.5px;color:#444444;font-weight:400;font-family:'Liberation Sans';transform:scaleX(0.8080);">REVIEW</span>
<span style="left:532.80px;top:36.00px;font-size:12.5px;color:#444444;font-weight:400;font-family:'Liberation Sans';transform:scaleX(0.8368);">VIEW</span>
<span style="left:854.84px;top:35.00px;font-size:12.5px;color:#444444;font-weight:400;font-family:'Liberation Sans';transform:scaleX(0.8649);">Kinsler, Jacklyn (DF PL S&amp;SE AM STS PRS TEST)</span>
<span style="left:10.80px;top:133.00px;font-size:11px;color:#505050;font-weight:400;font-family:'Liberation Sans';transform:scaleX(1.0604);">Clipboard</span>
<span style="left:170.60px;top:133.00px;font-size:11px;color:#505050;font-weight:400;font-family:'Liberation Sans';transform:scaleX(1.0658);">Font</span>
<span style="left:391.50px;top:133.00px;font-size:11px;color:#505050;font-weight:400;font-family:'Liberation Sans';transform:scaleX(1.0725);">Alignment</span>
<span style="left:600.00px;top:133.00px;font-size:11px;color:#505050;font-weight:400;font-family:'Liberation Sans';transform:scaleX(1.0137);">Number</span>
<span style="left:773.50px;top:133.00px;font-size:11px;color:#505050;font-weight:400;font-family:'Liberation Sans';transform:scaleX(0.9161);">Styles</span>
<span style="left:908.60px;top:133.00px;font-size:11px;color:#505050;font-weight:400;font-family:'Liberation Sans';transform:scaleX(0.9219);">Cells</span>
<span style="left:1009.50px;top:133.00px;font-size:11px;color:#505050;font-weight:400;font-family:'Liberation Sans';transform:scaleX(1.0741);">Editing</span>
<span style="left:11.92px;top:97.00px;font-size:12.5px;color:#444444;font-weight:400;font-family:'Liberation Sans';transform:scaleX(0.8771);">Paste</span>
<span style="left:94.60px;top:70.90px;font-size:12.5px;color:#222;font-weight:400;font-family:'Liberation Sans';transform:scaleX(0.9524);">Calibri</span>
<span style="left:204.60px;top:70.70px;font-size:12.5px;color:#222;font-weight:400;font-family:'Liberation Sans';transform:scaleX(0.8753);">11</span>
<span style="left:251.20px;top:70.80px;font-size:13.5px;color:#555;font-weight:400;font-family:'Liberation Sans';transform:scaleX(1.0444);">A</span>
<span style="left:274.00px;top:72.80px;font-size:11px;color:#555;font-weight:400;font-family:'Liberation Sans';transform:scaleX(0.9125);">A</span>
<span style="left:97.70px;top:101.00px;font-size:12.5px;color:#444;font-weight:700;font-family:'Liberation Sans';transform:scaleX(0.8222);">B</span>
<span style="left:121.07px;top:100.00px;font-size:13px;color:#444;font-weight:400;font-family:'Liberation Serif';font-style:italic;transform:scaleX(1.1667);-webkit-text-stroke:0.3px #444;">I</span>
<span style="left:141.70px;top:101.00px;font-size:12.5px;color:#444;font-weight:700;font-family:'Liberation Sans';transform:scaleX(0.8667);">U</span>
<span style="left:261.60px;top:101.00px;font-size:12.5px;color:#555;font-weight:700;font-family:'Liberation Sans';transform:scaleX(1.0222);">A</span>
<span style="left:448.00px;top:71.00px;font-size:12.5px;color:#444444;font-weight:400;font-family:'Liberation Sans';transform:scaleX(0.9264);">Wrap Text</span>
<span style="left:447.43px;top:102.00px;font-size:12.5px;color:#444444;font-weight:400;font-family:'Liberation Sans';transform:scaleX(0.9728);">Merge &amp; Center</span>
<span style="left:565.70px;top:70.70px;font-size:12.5px;color:#222;font-weight:400;font-family:'Liberation Sans';transform:scaleX(0.8972);">General</span>
<span style="left:569.80px;top:99.00px;font-size:14.5px;color:#555;font-weight:400;font-family:'Liberation Sans';transform:scaleX(0.9750);">$</span>
<span style="left:601.40px;top:101.00px;font-size:14px;color:#555;font-weight:400;font-family:'Liberation Sans';transform:scaleX(1.0250);">%</span>
<span style="left:659.00px;top:99.00px;font-size:9px;color:#444;font-weight:400;font-family:'Liberation Sans';transform:scaleX(0.9333);">.0</span>
<span style="left:656.00px;top:106.00px;font-size:9px;color:#444;font-weight:400;font-family:'Liberation Sans';transform:scaleX(0.7996);">.00</span>
<span style="left:677.00px;top:99.00px;font-size:9px;color:#444;font-weight:400;font-family:'Liberation Sans';transform:scaleX(0.7996);">.00</span>
<span style="left:681.00px;top:106.00px;font-size:9px;color:#444;font-weight:400;font-family:'Liberation Sans';transform:scaleX(0.9333);">.0</span>
<span style="left:707.50px;top:97.00px;font-size:12.5px;color:#444444;font-weight:400;font-family:'Liberation Sans';transform:scaleX(0.9876);">Conditional</span>
<span style="left:703.82px;top:113.00px;font-size:12.5px;color:#444444;font-weight:400;font-family:'Liberation Sans';transform:scaleX(0.9764);">Formatting</span>
<span style="left:775.67px;top:97.00px;font-size:12.5px;color:#444444;font-weight:400;font-family:'Liberation Sans';transform:scaleX(0.9289);">Format as</span>
<span style="left:785.30px;top:113.00px;font-size:12.5px;color:#444444;font-weight:400;font-family:'Liberation Sans';transform:scaleX(0.9221);">Table</span>
<span style="left:842.30px;top:97.00px;font-size:12.5px;color:#444444;font-weight:400;font-family:'Liberation Sans';transform:scaleX(0.9347);">Cell</span>
<span style="left:833.00px;top:113.00px;font-size:12.5px;color:#444444;font-weight:400;font-family:'Liberation Sans';transform:scaleX(0.8819);">Styles</span>
<span style="left:904.07px;top:63.00px;font-size:12.5px;color:#444444;font-weight:400;font-family:'Liberation Sans';transform:scaleX(0.9321);">Insert</span>
<span style="left:904.68px;top:86.00px;font-size:12.5px;color:#444444;font-weight:400;font-family:'Liberation Sans';transform:scaleX(0.9153);">Delete</span>
<span style="left:904.65px;top:109.00px;font-size:12.5px;color:#444444;font-weight:400;font-family:'Liberation Sans';transform:scaleX(0.9485);">Format</span>
<span style="left:1008.20px;top:61.00px;font-size:17px;color:#3e7bc0;font-weight:400;font-family:'Liberation Sans';transform:scaleX(0.9000);-webkit-text-stroke:0.5px #3e7bc0;">A</span>
<span style="left:1009.00px;top:76.00px;font-size:15.5px;color:#9b59b6;font-weight:400;font-family:'Liberation Sans';transform:scaleX(1.0778);-webkit-text-stroke:0.7px #9b59b6;">Z</span>
<span style="left:1006.20px;top:97.00px;font-size:12.5px;color:#444444;font-weight:400;font-family:'Liberation Sans';transform:scaleX(0.9492);">Sort &amp;</span>
<span style="left:1005.65px;top:113.00px;font-size:12.5px;color:#444444;font-weight:400;font-family:'Liberation Sans';transform:scaleX(0.9506);">Filter</span>
<span style="left:1047.52px;top:97.00px;font-size:12.5px;color:#444444;font-weight:400;font-family:'Liberation Sans';transform:scaleX(0.9779);">Find &amp;</span>
<span style="left:1046.30px;top:113.00px;font-size:12.5px;color:#444444;font-weight:400;font-family:'Liberation Sans';transform:scaleX(0.8790);">Select</span>
<span style="left:12.47px;top:165.00px;font-size:12.5px;color:#222;font-weight:400;font-family:'Liberation Sans';transform:scaleX(1.0334);">B51</span>
<span style="left:228.30px;top:167.00px;font-size:12.5px;color:#666;font-weight:700;font-family:'Liberation Serif';font-style:italic;transform:scaleX(1.5000);">x</span>
<span style="left:263.00px;top:165.00px;font-size:12.5px;color:#222;font-weight:400;font-family:'Liberation Sans';transform:scaleX(1.1838);">linear</span>
<span style="left:171.80px;top:217.00px;font-size:12.5px;color:#444;font-weight:400;font-family:'Liberation Sans';transform:scaleX(0.7778);">A</span>
<span style="left:941.80px;top:217.00px;font-size:12.5px;color:#217346;font-weight:700;font-family:'Liberation Sans';transform:scaleX(0.8333);">B</span>
<span style="left:10.50px;top:238.00px;font-size:12.5px;color:#444;font-weight:400;font-family:'Liberation Sans';transform:scaleX(0.7857);">1</span>
<span style="left:29.00px;top:238.00px;font-size:12.5px;color:#111;font-weight:400;font-family:'Liberation Sans';transform:scaleX(1.0361);">Curve 1</span>
<span style="left:10.50px;top:258.00px;font-size:12.5px;color:#444;font-weight:400;font-family:'Liberation Sans';">2</span>
<span style="left:10.50px;top:278.00px;font-size:12.5px;color:#444;font-weight:400;font-family:'Liberation Sans';">3</span>
<span style="left:29.00px;top:278.00px;font-size:12.5px;color:#111;font-weight:400;font-family:'Liberation Sans';transform:scaleX(1.1149);">TestLab\Block\Absolute Time Status</span>
<span style="left:325.44px;top:278.00px;font-size:12.5px;color:#111;font-weight:400;font-family:'Liberation Sans';transform:scaleX(1.1610);">N/A</span>
<span style="left:10.50px;top:298.00px;font-size:12.5px;color:#444;font-weight:400;font-family:'Liberation Sans';">4</span>
<span style="left:29.00px;top:298.00px;font-size:12.5px;color:#111;font-weight:400;font-family:'Liberation Sans';transform:scaleX(1.1087);">TestLab\Block\Absolute Time Source</span>
<span style="left:325.65px;top:298.00px;font-size:12.5px;color:#111;font-weight:400;font-family:'Liberation Sans';transform:scaleX(0.9549);">PC</span>
<span style="left:10.50px;top:318.00px;font-size:12.5px;color:#444;font-weight:400;font-family:'Liberation Sans';">5</span>
<span style="left:29.00px;top:318.00px;font-size:12.5px;color:#111;font-weight:400;font-family:'Liberation Sans';transform:scaleX(1.1277);">TestLab\Block\Absolute Time</span>
<span style="left:326.60px;top:318.00px;font-size:12.5px;color:#111;font-weight:400;font-family:'Liberation Sans';transform:scaleX(1.0156);">2016-05-09 17:20:05 ms 688.171</span>
<span style="left:10.50px;top:338.00px;font-size:12.5px;color:#444;font-weight:400;font-family:'Liberation Sans';">6</span>
<span style="left:29.00px;top:338.00px;font-size:12.5px;color:#111;font-weight:400;font-family:'Liberation Sans';transform:scaleX(1.1340);">Standard\Function\Absolute Time</span>
<span style="left:326.60px;top:338.00px;font-size:12.5px;color:#111;font-weight:400;font-family:'Liberation Sans';transform:scaleX(1.0156);">2016-05-09 17:20:05 ms 688.171</span>
<span style="left:10.50px;top:358.00px;font-size:12.5px;color:#444;font-weight:400;font-family:'Liberation Sans';">7</span>
<span style="left:29.00px;top:358.00px;font-size:12.5px;color:#111;font-weight:400;font-family:'Liberation Sans';transform:scaleX(1.1374);">Standard\Function\Module ID</span>
<span style="left:325.49px;top:358.00px;font-size:12.5px;color:#111;font-weight:400;font-family:'Liberation Sans';transform:scaleX(1.1130);">M-1</span>
<span style="left:10.50px;top:378.00px;font-size:12.5px;color:#444;font-weight:400;font-family:'Liberation Sans';">8</span>
<span style="left:29.00px;top:378.00px;font-size:12.5px;color:#111;font-weight:400;font-family:'Liberation Sans';transform:scaleX(1.1281);">Standard\Function\Position ID</span>
<span style="left:325.62px;top:378.00px;font-size:12.5px;color:#111;font-weight:400;font-family:'Liberation Sans';transform:scaleX(0.9834);">P0</span>
<span style="left:10.50px;top:398.00px;font-size:12.5px;color:#444;font-weight:400;font-family:'Liberation Sans';">9</span>
<span style="left:29.00px;top:398.00px;font-size:12.5px;color:#111;font-weight:400;font-family:'Liberation Sans';transform:scaleX(1.1200);">Standard\Function\Channel group</span>
<span style="left:326.60px;top:398.00px;font-size:12.5px;color:#111;font-weight:400;font-family:'Liberation Sans';transform:scaleX(1.0373);">Group 1</span>
<span style="left:7.60px;top:418.00px;font-size:12.5px;color:#444;font-weight:400;font-family:'Liberation Sans';transform:scaleX(0.8888);">10</span>
<span style="left:29.00px;top:418.00px;font-size:12.5px;color:#111;font-weight:400;font-family:'Liberation Sans';transform:scaleX(1.1146);">TestLab\Block\Channelgroup</span>
<span style="left:326.60px;top:418.00px;font-size:12.5px;color:#111;font-weight:400;font-family:'Liberation Sans';transform:scaleX(1.1514);">Vibration</span>
<span style="left:7.60px;top:438.00px;font-size:12.5px;color:#444;font-weight:400;font-family:'Liberation Sans';transform:scaleX(0.9521);">11</span>
<span style="left:29.00px;top:438.00px;font-size:12.5px;color:#111;font-weight:400;font-family:'Liberation Sans';transform:scaleX(1.1276);">Standard\Function\Channelgroup</span>
<span style="left:326.60px;top:438.00px;font-size:12.5px;color:#111;font-weight:400;font-family:'Liberation Sans';transform:scaleX(1.1514);">Vibration</span>
<span style="left:7.60px;top:458.00px;font-size:12.5px;color:#444;font-weight:400;font-family:'Liberation Sans';transform:scaleX(0.8888);">12</span>
<span style="left:29.00px;top:458.00px;font-size:12.5px;color:#111;font-weight:400;font-family:'Liberation Sans';transform:scaleX(1.1357);">Standard\Function\Measured quantity</span>
<span style="left:325.53px;top:458.00px;font-size:12.5px;color:#111;font-weight:400;font-family:'Liberation Sans';transform:scaleX(1.0741);">Pressure</span>
<span style="left:7.60px;top:478.00px;font-size:12.5px;color:#444;font-weight:400;font-family:'Liberation Sans';transform:scaleX(0.8888);">13</span>
<span style="left:29.00px;top:478.00px;font-size:12.5px;color:#111;font-weight:400;font-family:'Liberation Sans';transform:scaleX(1.1357);">TestLab\Block\Cylinder offset</span>
<span style="left:326.60px;top:478.00px;font-size:12.5px;color:#111;font-weight:400;font-family:'Liberation Sans';transform:scaleX(0.9141);">0 °</span>
<span style="left:7.60px;top:498.00px;font-size:12.5px;color:#444;font-weight:400;font-family:'Liberation Sans';transform:scaleX(0.8888);">14</span>
<span style="left:29.00px;top:498.00px;font-size:12.5px;color:#111;font-weight:400;font-family:'Liberation Sans';transform:scaleX(1.0986);">Standard\Function\User channel ID 3</span>
<span style="left:7.60px;top:518.00px;font-size:12.5px;color:#444;font-weight:400;font-family:'Liberation Sans';transform:scaleX(0.8888);">15</span>
<span style="left:29.00px;top:518.00px;font-size:12.5px;color:#111;font-weight:400;font-family:'Liberation Sans';transform:scaleX(1.1117);">TestLab\Block\User comment</span>
<span style="left:7.60px;top:538.00px;font-size:12.5px;color:#444;font-weight:400;font-family:'Liberation Sans';transform:scaleX(0.8888);">16</span>
<span style="left:29.00px;top:538.00px;font-size:12.5px;color:#111;font-weight:400;font-family:'Liberation Sans';transform:scaleX(1.1047);">TestLab\Block\User channel id</span>
<span style="left:7.60px;top:558.00px;font-size:12.5px;color:#444;font-weight:400;font-family:'Liberation Sans';transform:scaleX(0.8888);">17</span>
<span style="left:29.00px;top:558.00px;font-size:12.5px;color:#111;font-weight:400;font-family:'Liberation Sans';transform:scaleX(1.1183);">Standard\Function\User channel id</span>
<span style="left:7.60px;top:578.00px;font-size:12.5px;color:#444;font-weight:400;font-family:'Liberation Sans';transform:scaleX(0.8888);">18</span>
<span style="left:29.00px;top:578.00px;font-size:12.5px;color:#111;font-weight:400;font-family:'Liberation Sans';transform:scaleX(1.1162);">TestLab\Block\Channel id</span>
<span style="left:326.60px;top:578.00px;font-size:12.5px;color:#111;font-weight:400;font-family:'Liberation Sans';transform:scaleX(0.8429);">3</span>
<span style="left:7.60px;top:598.00px;font-size:12.5px;color:#444;font-weight:400;font-family:'Liberation Sans';transform:scaleX(0.8888);">19</span>
<span style="left:29.00px;top:598.00px;font-size:12.5px;color:#111;font-weight:400;font-family:'Liberation Sans';transform:scaleX(1.1231);">Standard\Function\Channel id</span>
<span style="left:326.60px;top:598.00px;font-size:12.5px;color:#111;font-weight:400;font-family:'Liberation Sans';transform:scaleX(0.8429);">3</span>
<span style="left:7.60px;top:618.00px;font-size:12.5px;color:#444;font-weight:400;font-family:'Liberation Sans';transform:scaleX(0.8888);">20</span>
<span style="left:29.00px;top:618.00px;font-size:12.5px;color:#111;font-weight:400;font-family:'Liberation Sans';transform:scaleX(1.1085);">TestLab\Block\Channel name</span>
<span style="left:326.60px;top:618.00px;font-size:12.5px;color:#111;font-weight:400;font-family:'Liberation Sans';transform:scaleX(0.8735);">C1</span>
<span style="left:7.60px;top:638.00px;font-size:12.5px;color:#444;font-weight:400;font-family:'Liberation Sans';transform:scaleX(0.8888);">21</span>
<span style="left:29.00px;top:638.00px;font-size:12.5px;color:#111;font-weight:400;font-family:'Liberation Sans';transform:scaleX(1.0891);">TestLab\Block\DOF id</span>
<span style="left:325.67px;top:638.00px;font-size:12.5px;color:#111;font-weight:400;font-family:'Liberation Sans';transform:scaleX(0.9260);">DRE</span>
<span style="left:7.60px;top:658.00px;font-size:12.5px;color:#444;font-weight:400;font-family:'Liberation Sans';transform:scaleX(0.8888);">22</span>
<span style="left:29.00px;top:658.00px;font-size:12.5px;color:#111;font-weight:400;font-family:'Liberation Sans';transform:scaleX(1.1056);">Standard\Function\DOF id</span>
<span style="left:325.67px;top:658.00px;font-size:12.5px;color:#111;font-weight:400;font-family:'Liberation Sans';transform:scaleX(0.9260);">DRE</span>
<span style="left:113.00px;top:679.00px;font-size:12.5px;color:#217346;font-weight:700;font-family:'Liberation Sans';">Sheet1</span>
<span style="left:9.00px;top:705.00px;font-size:11px;color:#fff;font-weight:400;font-family:'Liberation Sans';transform:scaleX(0.8039);">READY</span>
<span style="left:1108.70px;top:704.00px;font-size:11px;color:#fff;font-weight:400;font-family:'Liberation Sans';transform:scaleX(0.9593);">100%</span>
</div>
</body></html>
